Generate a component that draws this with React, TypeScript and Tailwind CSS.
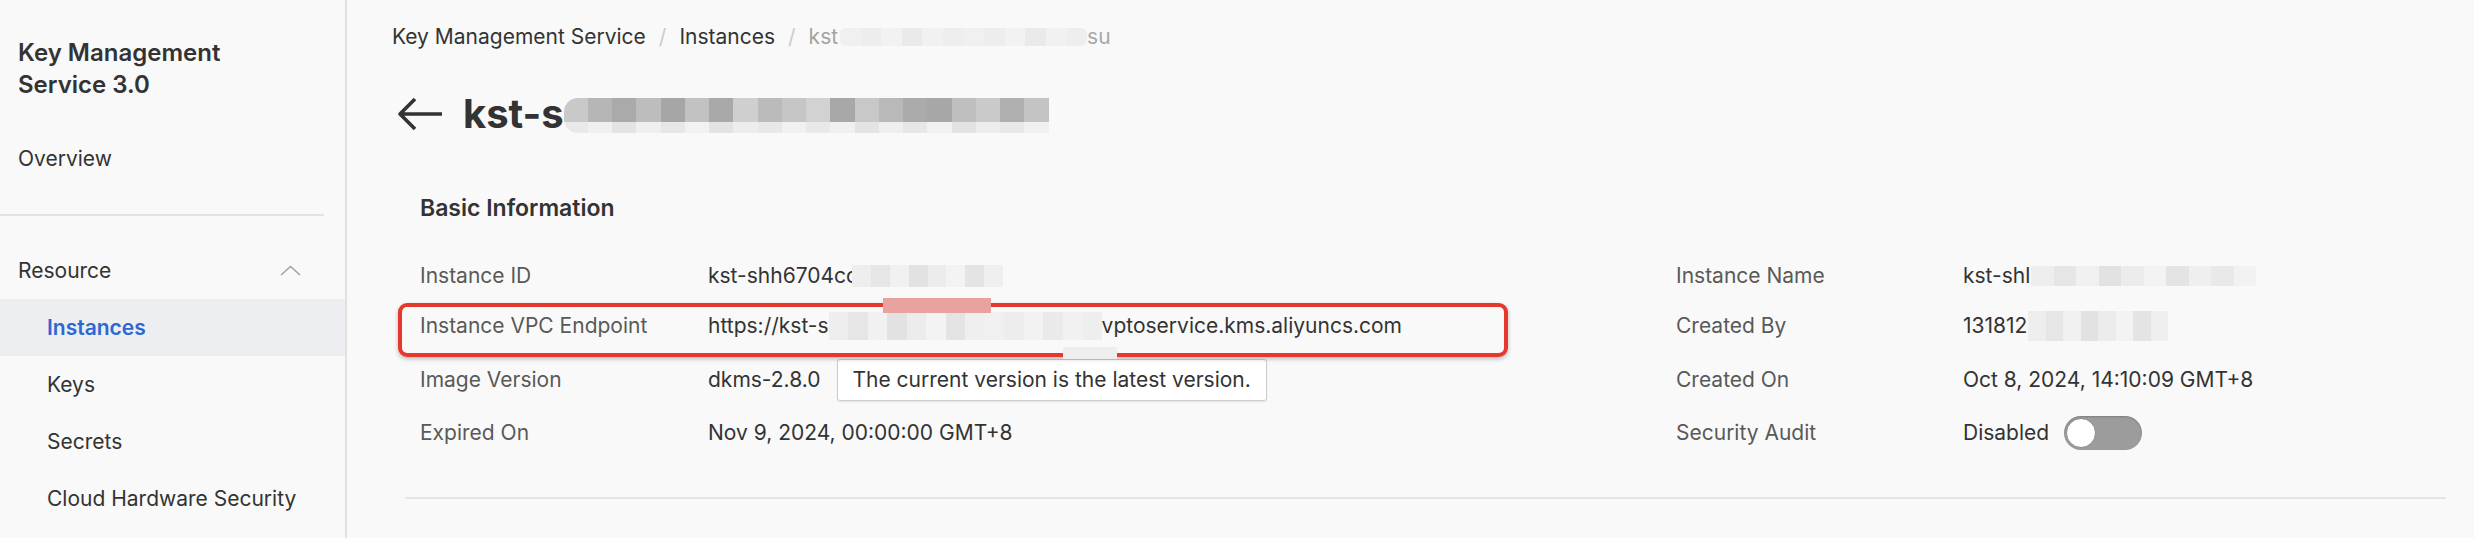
import React from 'react';

const Mosaic = ({ cells, className }: { cells: string[]; className: string }) => (
  <div className={`flex shrink-0 overflow-hidden ${className}`}>
    {cells.map((c, i) => (
      <div key={i} className={`flex-1 ${c}`} />
    ))}
  </div>
);

const light = ['bg-[#eeeeee]', 'bg-[#e6e6e6]', 'bg-[#f1f1f1]', 'bg-[#e2e2e2]', 'bg-[#ececec]', 'bg-[#f3f3f3]', 'bg-[#e4e4e4]', 'bg-[#efefef]'];
const softer = ['bg-[#f0f0f0]', 'bg-[#ededed]', 'bg-[#f2f2f2]', 'bg-[#eaeaea]', 'bg-[#f1f1f1]', 'bg-[#eeeeee]'];
const dark = ['bg-[#c9c9c9]', 'bg-[#b6b6b6]', 'bg-[#aaaaaa]', 'bg-[#bdbdbd]', 'bg-[#a6a6a6]', 'bg-[#c2c2c2]', 'bg-[#a9a9a9]', 'bg-[#cfcfcf]', 'bg-[#bbbbbb]', 'bg-[#c6c6c6]', 'bg-[#d2d2d2]', 'bg-[#a8a8a8]', 'bg-[#c8c8c8]', 'bg-[#b9b9b9]', 'bg-[#ababab]', 'bg-[#a7a7a7]', 'bg-[#bfbfbf]', 'bg-[#cacaca]', 'bg-[#b0b0b0]', 'bg-[#c4c4c4]'];
const pale = ['bg-[#e9e9e9]', 'bg-[#f0f0f0]', 'bg-[#e4e4e4]', 'bg-[#efefef]', 'bg-[#e7e7e7]', 'bg-[#f2f2f2]', 'bg-[#e3e3e3]', 'bg-[#ededed]', 'bg-[#e8e8e8]', 'bg-[#f1f1f1]'];

const Label = ({ children }: { children: React.ReactNode }) => (
  <div className="flex items-center text-[#595959]">{children}</div>
);

const Value = ({ children }: { children: React.ReactNode }) => (
  <div className="flex items-center text-[#333]">{children}</div>
);

export default function App() {
  const subItems = ['Keys', 'Secrets', 'Cloud Hardware Security'];

  return (
    <div className="flex h-[538px] w-[2474px] overflow-hidden bg-[#f9f9f9] font-['Inter','Liberation_Sans',sans-serif] text-[#333]">
      {/* sidebar */}
      <aside className="w-[347px] shrink-0 border-r-2 border-[#e1e1e1] pt-[37px]">
        <div className="pl-[18px] text-[24px] font-semibold leading-[32px] text-[#333]">
          Key Management
          <br />
          Service 3.0
        </div>
        <div className="mt-[29px] flex h-[57px] items-center pl-[18px] text-[21px]">Overview</div>
        <div className="mt-[27px] h-[2px] w-[324px] bg-[#e3e3e3]" />
        <div className="mt-[26px] flex h-[57px] items-center justify-between pl-[18px] pr-[44px] text-[21px]">
          <span>Resource</span>
          <svg width="21" height="11" viewBox="0 0 21 11" fill="none">
            <path d="M1 10L10.5 1.5L20 10" stroke="#a3a3a3" strokeWidth="1.6" />
          </svg>
        </div>
        <div className="flex h-[57px] items-center bg-[#eceef1] pl-[47px] text-[21px] font-semibold text-[#2d68d2]">
          Instances
        </div>
        {subItems.map((s) => (
          <div key={s} className="flex h-[57px] items-center pl-[47px] text-[21px]">
            {s}
          </div>
        ))}
      </aside>

      {/* main */}
      <main className="flex-1 pl-[45px] pr-[28px]">
        <div className="flex h-[51px] items-center pt-[23px] text-[21px] leading-[28px]">
          <span className="text-[#333]">Key Management Service</span>
          <span className="mx-[13px] text-[#cccccc]">/</span>
          <span className="text-[#333]">Instances</span>
          <span className="mx-[13px] text-[#cccccc]">/</span>
          <span className="text-[#a3a3a3]">kst</span>
          <Mosaic cells={softer.concat(softer)} className="ml-[2px] h-[18px] w-[247px] rounded-[6px]" />
          <span className="text-[#a8a8a8]">su</span>
        </div>

        <div className="mt-[39px] flex h-[48px] items-center pl-[5px]">
          <svg width="46" height="34" viewBox="0 0 46 34" fill="none">
            <path d="M45 17H3M18 2L3 17L18 32" stroke="#333" strokeWidth="3.6" strokeLinejoin="round" />
          </svg>
          <span className="ml-[20px] text-[40px] font-bold leading-[48px] text-[#333]">kst-s</span>
          <div className="mt-[3px] flex h-[35px] w-[485px] flex-col overflow-hidden rounded-l-[14px]">
            <Mosaic cells={dark} className="h-[24px] w-full" />
            <Mosaic cells={pale.concat(pale)} className="h-[11px] w-full" />
          </div>
        </div>

        <section className="ml-[13px] mt-[55px] border-b-2 border-[#e5e5e5] px-[15px] pb-[39px]">
          <h2 className="text-[23px] font-semibold leading-[30px] text-[#333]">Basic Information</h2>
          <div className="relative mt-[28px] grid grid-cols-[288px_968px_287px_1fr] grid-rows-[50px_50px_57px_50px] text-[21px] leading-[28px]">
            <Label>Instance ID</Label>
            <Value>
              kst-shh6704cc
              <Mosaic cells={light} className="-ml-[6px] h-[22px] w-[151px]" />
            </Value>
            <Label>Instance Name</Label>
            <Value>
              kst-shl
              <Mosaic cells={light.concat(['bg-[#e9e9e9]', 'bg-[#f2f2f2]'])} className="ml-[1px] h-[20px] w-[225px]" />
            </Value>

            <Label>Instance VPC Endpoint</Label>
            <Value>
              https://kst-s
              <Mosaic cells={light.concat(softer)} className="h-[28px] w-[273px]" />
              vptoservice.kms.aliyuncs.com
            </Value>
            <Label>Created By</Label>
            <Value>
              131812
              <Mosaic cells={light} className="ml-[1px] h-[30px] w-[140px]" />
            </Value>

            <Label>Image Version</Label>
            <Value>
              dkms-2.8.0
              <span className="ml-[16px] flex h-[42px] items-center rounded-[3px] border border-[#cdcdcd] bg-white px-[15px] shadow-[0_1px_2px_rgba(0,0,0,0.08)]">
                The current version is the latest version.
              </span>
            </Value>
            <Label>Created On</Label>
            <Value>Oct 8, 2024, 14:10:09 GMT+8</Value>

            <Label>Expired On</Label>
            <Value>Nov 9, 2024, 00:00:00 GMT+8</Value>
            <Label>Security Audit</Label>
            <Value>
              Disabled
              <span className="ml-[15px] flex h-[34px] w-[78px] items-center rounded-full bg-[#9c9c9c] shadow-[inset_0_1px_2px_rgba(0,0,0,0.2)]">
                <span className="ml-[2px] h-[30px] w-[30px] rounded-full border border-[#8c8c8c] bg-white" />
              </span>
            </Value>

            {/* annotation box */}
            <div className="pointer-events-none absolute left-[-22px] top-[52px] h-[54px] w-[1110px] rounded-[9px] border-[4px] border-[#e5392d] shadow-[0_2px_4px_rgba(0,0,0,0.25)]" />
            <div className="pointer-events-none absolute left-[463px] top-[47px] h-[15px] w-[108px] bg-[#e9a29d]" />
            <div className="pointer-events-none absolute left-[643px] top-[96px] h-[12px] w-[54px] bg-[#eeeeee]" />
          </div>
        </section>
      </main>
    </div>
  );
}
